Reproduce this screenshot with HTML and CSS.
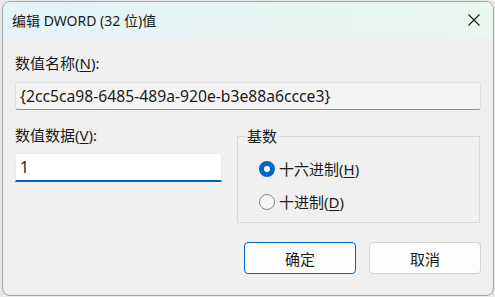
FILE: index.html
```html
<!DOCTYPE html>
<html lang="zh-CN">
<head>
  <meta charset="UTF-8" />
  <title>编辑 DWORD (32 位)值</title>
  <link rel="stylesheet" href="styles.css">
</head>
<body>
  <div class="window">
    <div class="titlebar">
      <span class="title">编辑 DWORD (32 位)值</span>
      <span class="close">
        <svg width="12" height="12" viewBox="0 0 12 12"><path d="M0.5 0.5 L11.5 11.5 M11.5 0.5 L0.5 11.5" stroke="#1b1b1b" stroke-width="1.1" fill="none"/></svg>
      </span>
    </div>

    <div class="content">
      <div class="label">数值名称(<u>N</u>):</div>
      <div class="field readonly">{2cc5ca98-6485-489a-920e-b3e88a6ccce3}</div>

      <div class="row">
        <div class="col-left">
          <div class="label">数值数据(<u>V</u>):</div>
          <div class="field edit">1</div>
        </div>
        <fieldset class="base">
          <legend>基数</legend>
          <div class="radio"><span class="dot checked"></span><span>十六进制(<u>H</u>)</span></div>
          <div class="radio"><span class="dot"></span><span>十进制(<u>D</u>)</span></div>
        </fieldset>
      </div>

      <div class="buttons">
        <div class="btn primary">确定</div>
        <div class="btn">取消</div>
      </div>
    </div>
  </div>
</body>
</html>
```

FILE: styles.css
```css
html, body {
  margin: 0;
  padding: 0;
  height: 100%;
  background-color: #e9e9e9;
  font-family: "Noto Sans", "Noto Sans CJK SC", sans-serif;
  color: #1b1b1b;
  overflow: hidden;
}

.window {
  width: 492px;
  height: 295px;
  margin: 1px 0 0 2px;
  box-sizing: border-box;
  border: 1px solid #a3a3a3;
  border-radius: 8px;
  overflow: hidden;
  background-color: #f0f0f0;
}

.titlebar {
  height: 35px;
  display: flex;
  align-items: center;
  justify-content: space-between;
  padding-left: 9px;
  background: linear-gradient(90deg, #e3f3f7, #eaf7ef);
}

.title {
  font-size: 14px;
}

.close {
  width: 38px;
  height: 35px;
  display: flex;
  align-items: center;
  justify-content: center;
}

.content {
  padding: 16px 12px 0 12px;
}

.label {
  font-size: 15px;
  line-height: 20px;
}

u {
  text-decoration-thickness: 1px;
  text-underline-offset: 2px;
}

.field {
  box-sizing: border-box;
  display: flex;
  align-items: center;
  padding: 0 4px;
  font-size: 15.7px;
  border-radius: 3px;
}

.readonly {
  margin-top: 9px;
  height: 28px;
  background-color: #f4f4f4;
  border: 1px solid #e2e2e2;
  border-bottom-color: #8d8d8d;
}

.row {
  margin-top: 15px;
  display: grid;
  grid-template-columns: 207px 243px;
  column-gap: 15px;
}

.edit {
  margin-top: 8px;
  height: 29px;
  background-color: #fff;
  border: 1px solid #ececec;
  border-bottom: 2px solid #0067c0;
  border-radius: 3px 3px 0 0;
}

.base {
  margin: 1px 0 0 0;
  padding: 6px 0 4px 8px;
  border: 1px solid #dadada;
  min-width: 0;
}

.base legend {
  padding: 0 1px;
  font-size: 15px;
  line-height: 20px;
}

.radio {
  height: 33px;
  display: flex;
  align-items: center;
  gap: 4px;
  margin-left: 13px;
  font-size: 15px;
}

.dot {
  width: 16px;
  height: 16px;
  box-sizing: border-box;
  border-radius: 50%;
  border: 1px solid #8a8a8a;
  background-color: #f6f6f6;
}

.dot.checked {
  border: 5px solid #0067c0;
  background-color: #fff;
}

.buttons {
  margin-top: 19px;
  display: flex;
  justify-content: flex-end;
  gap: 13px;
}

.btn {
  width: 112px;
  height: 32px;
  box-sizing: border-box;
  display: flex;
  align-items: center;
  justify-content: center;
  font-size: 15px;
  background-color: #fdfdfd;
  border: 1px solid #d3d3d3;
  border-radius: 4px;
}

.btn.primary {
  border-color: #0067c0;
}
```
